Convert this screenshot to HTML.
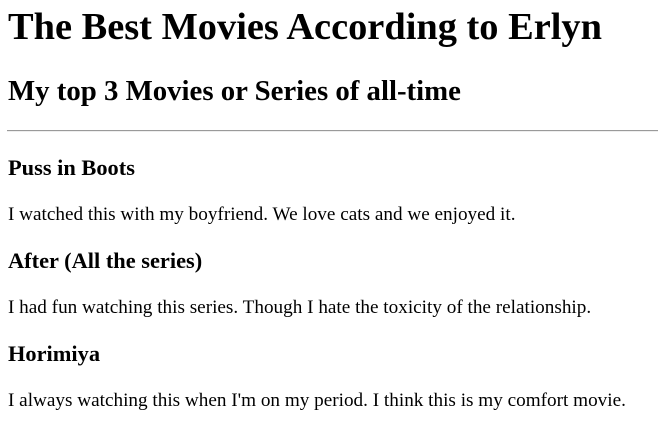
<!DOCTYPE html>
<html><head><style>
body{margin:0 1px 0 7px;font-family:"Liberation Serif",serif;color:#000;background:#fff}
h1{font-size:38.4px;margin:5px 0 0 1px;line-height:44px;}
h2{font-size:28.8px;margin:26px 0 0 1px;line-height:33px}
h3{font-size:22.4px;margin:22px 0 0 1px;line-height:26px}
hr+h3{margin-top:23px}
p{font-size:19.2px;margin:23px 0 0 1px;line-height:22px}
hr{margin:22px 0 0 0;border:none;border-top:1px solid #9a9a9a;border-bottom:1px solid #eee}
</style></head><body>
<h1>The Best Movies According to Erlyn</h1>
<h2>My top 3 Movies or Series of all-time</h2>
<hr>
<h3>Puss in Boots</h3>
<p>I watched this with my boyfriend. We love cats and we enjoyed it.</p>
<h3>After (All the series)</h3>
<p>I had fun watching this series. Though I hate the toxicity of the relationship.</p>
<h3>Horimiya</h3>
<p>I always watching this when I'm on my period. I think this is my comfort movie.</p>
</body></html>
